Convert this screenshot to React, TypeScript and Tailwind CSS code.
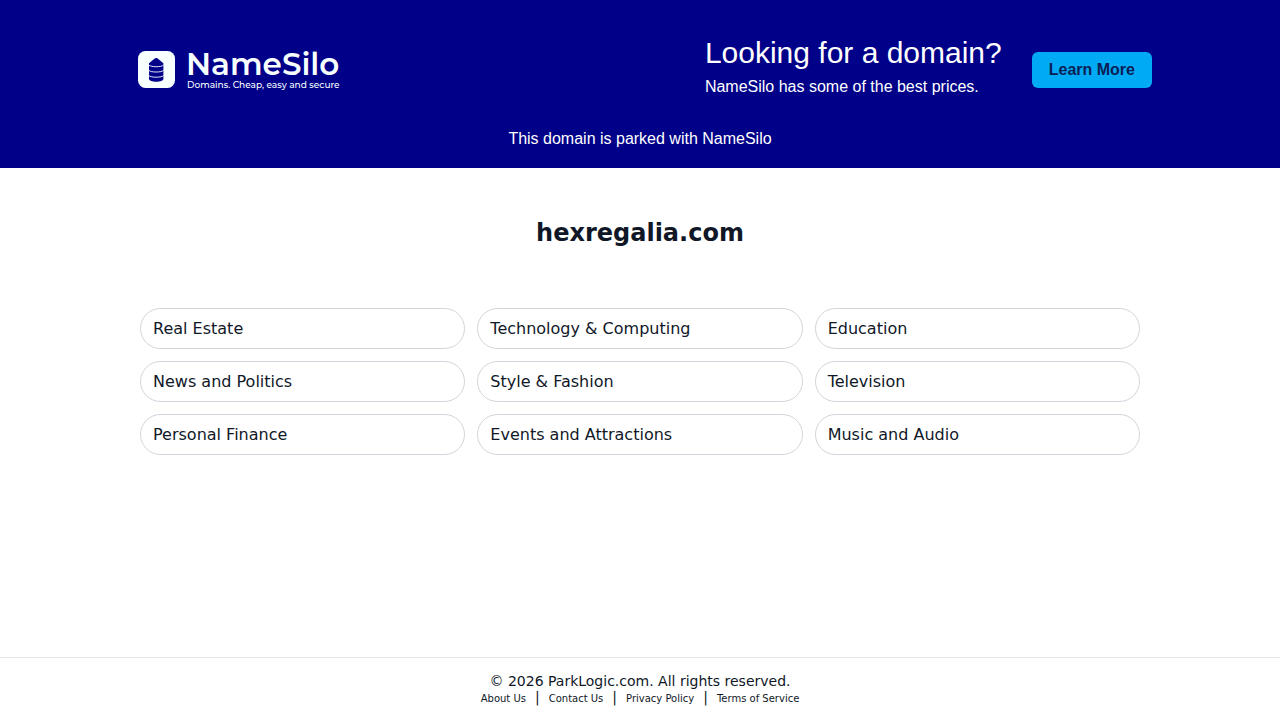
const categories = [
  "Real Estate",
  "Technology & Computing",
  "Education",
  "News and Politics",
  "Style & Fashion",
  "Television",
  "Personal Finance",
  "Events and Attractions",
  "Music and Audio",
];

const footerLinks = ["About Us", "Contact Us", "Privacy Policy", "Terms of Service"];

function SiloMark() {
  return (
    <svg viewBox="0 0 37 37" className="size-[37px] shrink-0" aria-hidden="true">
      <rect width="37" height="37" rx="7.5" fill="#f8ffff" />
      <path
        d="M11 12.2 L17 7.3 Q18.2 6.5 19.4 7.3 L25.4 12.2 V28 C25.4 29.6 22.2 30.8 18.2 30.8 C14.2 30.8 11 29.6 11 28 Z"
        fill="#000088"
      />
      <g fill="none" stroke="#f8ffff" strokeWidth="0.9">
        <path d="M10.8 14 C12.6 16.3 23.8 16.3 25.6 14" />
        <path d="M10.8 19.3 C12.6 21.6 23.8 21.6 25.6 19.3" />
        <path d="M10.8 24.5 C12.6 26.8 23.8 26.8 25.6 24.5" />
      </g>
    </svg>
  );
}

function Logo() {
  return (
    <a href="#namesilo" className="flex items-center gap-[11px] pb-px text-[#f8ffff]">
      <SiloMark />
      <span className="flex flex-col font-['Montserrat','Lato',sans-serif] whitespace-nowrap">
        <span className="text-[31px] leading-[30px] font-semibold">NameSilo</span>
        <span className="pl-px text-[9px] leading-[11px] font-medium">
          Domains. Cheap, easy and secure
        </span>
      </span>
    </a>
  );
}

export default function App() {
  return (
    <div className="flex min-h-screen flex-col bg-white font-['DejaVu_Sans',sans-serif] text-gray-900">
      <header className="bg-[#000088] pt-8 pb-4 font-['Liberation_Sans',sans-serif] text-white">
        <div className="mx-auto flex max-w-[1024px] items-center justify-between pl-2.5">
          <Logo />
          <div className="flex items-center gap-[30px]">
            <div className="pb-2">
              <h2 className="text-3xl leading-[42px]">Looking for a domain?</h2>
              <p className="text-base leading-[26px]">NameSilo has some of the best prices.</p>
            </div>
            <a
              href="#learn"
              className="rounded-md bg-[#00aaf4] px-[17px] py-1.5 text-base font-bold text-[#0b2056]"
            >
              Learn More
            </a>
          </div>
        </div>
        <p className="pt-[18px] text-center text-base leading-[26px]">
          This domain is parked with NameSilo
        </p>
      </header>

      <main className="mx-auto w-full max-w-[1000px] flex-1 pt-12">
        <h1 className="text-center text-2xl leading-[34px] font-bold">hexregalia.com</h1>
        <nav className="mt-[58px] grid grid-cols-3 gap-3">
          {categories.map((name) => (
            <a
              key={name}
              href="#category"
              className="rounded-full border border-gray-300 px-3 py-2 text-base leading-[23px]"
            >
              {name}
            </a>
          ))}
        </nav>
      </main>

      <footer className="border-t border-gray-200 py-3.5 text-center text-sm">
        <p className="leading-[18px]">© 2026 ParkLogic.com. All rights reserved.</p>
        <ul className="flex items-baseline justify-center leading-[14px]">
          {footerLinks.map((label, i) => (
            <li key={label} className="flex items-baseline">
              {i > 0 && <span className="px-[9px]">|</span>}
              <a href="#info" className="text-[10px]">
                {label}
              </a>
            </li>
          ))}
        </ul>
      </footer>
    </div>
  );
}
